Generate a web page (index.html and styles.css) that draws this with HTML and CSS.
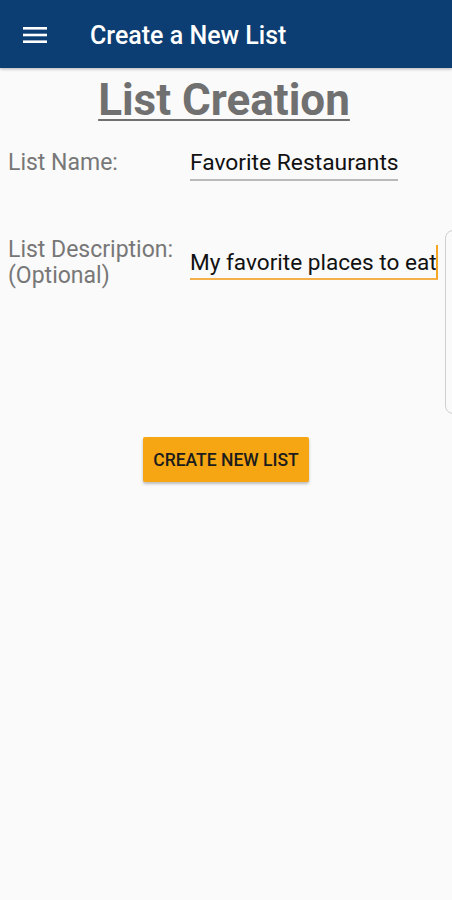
FILE: index.html
```html
<!DOCTYPE html>
<html lang="en">
<head>
    <meta charset="UTF-8">
    <meta name="viewport" content="width=device-width, initial-scale=1.0">
    <title>Create a New List</title>
    <link rel="stylesheet" href="styles.css">
</head>
<body>
    <header class="appbar">
        <svg class="menu-icon" width="24" height="18" viewBox="0 0 24 18">
            <rect x="0" y="1" width="24" height="2.6" fill="#fff"/>
            <rect x="0" y="7.7" width="24" height="2.6" fill="#fff"/>
            <rect x="0" y="14.4" width="24" height="2.6" fill="#fff"/>
        </svg>
        <h1 class="appbar-title">Create a New List</h1>
    </header>

    <main class="content">
        <h2 class="page-title">List Creation</h2>

        <div class="form-row">
            <label class="field-label" for="listName">List Name:</label>
            <div class="field">
                <input type="text" id="listName" class="field-input" value="Favorite Restaurants">
            </div>
        </div>

        <div class="form-row row-desc">
            <label class="field-label" for="listDesc">List Description:<br>(Optional)</label>
            <div class="field field-active">
                <input type="text" id="listDesc" class="field-input" value="My favorite places to eat">
                <span class="caret"></span>
            </div>
        </div>

        <div class="button-wrap">
            <button type="button" class="create-btn">CREATE NEW LIST</button>
        </div>
    </main>

    <div class="side-panel"></div>
</body>
</html>
```

FILE: styles.css
```css
/* list creation screen */
body {
    margin: 0;
    padding: 0;
    background-color: #fafafa;
    font-family: Roboto, "Liberation Sans", sans-serif;
    width: 452px;
    height: 900px;
    overflow: hidden;
    position: relative;
}
.appbar {
    height: 68px;
    background-color: #0c3e74;
    display: flex;
    align-items: center;
    box-shadow: 0 1px 3px rgba(0, 0, 0, 0.3);
}
.menu-icon {
    margin-left: 23px;
    margin-top: 1px;
}
.appbar-title {
    margin: 3px 0 0 43px;
    color: #fff;
    font-size: 25px;
    font-weight: 500;
}
.content {
    padding: 0 14px 0 8px;
}
.page-title {
    margin: 8px 0 0;
    text-align: center;
    font-size: 44px;
    font-weight: 700;
    color: #707070;
    text-decoration: underline;
    text-decoration-thickness: 2px;
    text-underline-offset: 4px;
    line-height: 48px;
    padding-left: 2px;
}
.form-row {
    display: flex;
    align-items: flex-start;
    margin-top: 25px;
}
.row-desc {
    margin-top: 56px;
}
.field-label {
    width: 182px;
    font-size: 23px;
    color: #777;
    line-height: 28px;
}
.row-desc .field-label {
    line-height: 26px;
}
.field {
    position: relative;
    width: 208px;
    border-bottom: 2px solid #b9b9b9;
    padding-bottom: 2px;
}
.field-active {
    width: 248px;
    border-bottom-color: #f5b04a;
    padding-bottom: 1px;
}
.field-input {
    display: block;
    border: none;
    background: transparent;
    padding: 0;
    margin: 0;
    font-family: Roboto, "Liberation Sans", sans-serif;
    font-size: 22.8px;
    color: #111;
    width: 100%;
    outline: none;
    line-height: 28px;
    height: 28px;
}
.row-desc .field-input {
    margin-top: 12px;
    font-size: 22.6px;
}
.caret {
    position: absolute;
    right: 0;
    top: 8px;
    width: 2px;
    height: 34px;
    background: #f5a623;
}
.button-wrap {
    display: flex;
    justify-content: center;
    margin-top: 148px;
    padding-left: 6px;
}
.create-btn {
    width: 166px;
    height: 45px;
    border: none;
    border-radius: 2px;
    background-color: #f5a612;
    color: #1c1c1c;
    font-family: Roboto, "Liberation Sans", sans-serif;
    font-size: 17.5px;
    font-weight: 500;
    padding: 0;
    box-shadow: 0 2px 3px rgba(0, 0, 0, 0.25);
}
.side-panel {
    position: absolute;
    left: 445px;
    top: 230px;
    width: 20px;
    height: 182px;
    border: 1px solid #cfcfcf;
    border-radius: 8px;
    background: #fafafa;
}
```
